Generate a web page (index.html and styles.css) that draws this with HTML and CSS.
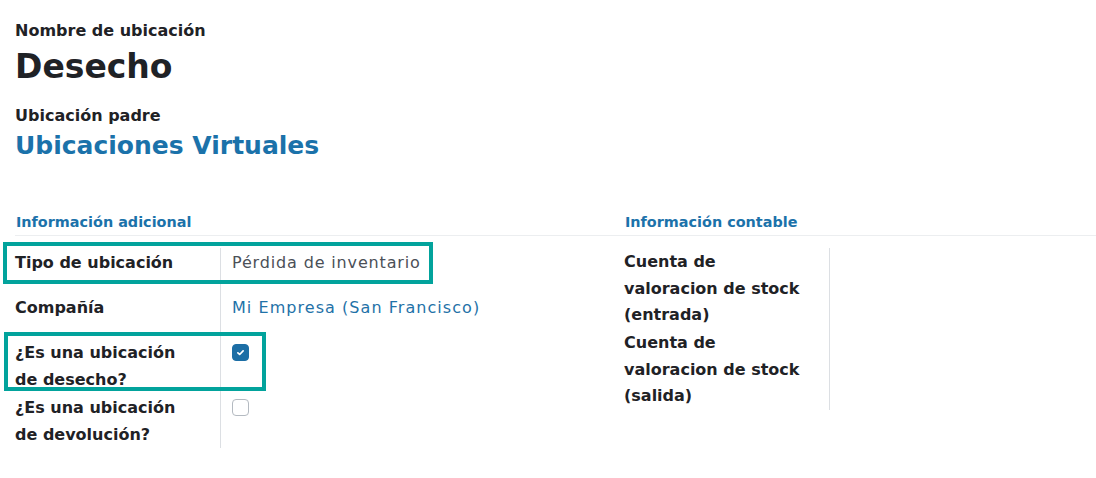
FILE: index.html
```html
<!DOCTYPE html>
<html lang="es">
<head>
<meta charset="utf-8">
<title>Desecho</title>
<link rel="stylesheet" href="styles.css">
</head>
<body>
<div class="sheet">
  <div class="field-title">
    <div class="title-label">Nombre de ubicación</div>
    <h1 class="title">Desecho</h1>
  </div>
  <div class="parent">
    <div class="title-label">Ubicación padre</div>
    <a class="parent-link" href="#">Ubicaciones Virtuales</a>
  </div>
  <div class="groups">
    <section class="group group-left">
      <h2 class="group-title">Información adicional</h2>
      <div class="rows">
        <div class="row">
          <div class="label">Tipo de ubicación</div>
          <div class="value value-min">Pérdida de inventario</div>
          <span class="annot annot-a"></span>
        </div>
        <div class="row">
          <div class="label">Compañía</div>
          <div class="value value-min"><a class="link" href="#">Mi Empresa (San Francisco)</a></div>
        </div>
        <div class="row">
          <div class="label">¿Es una ubicación<br>de desecho?</div>
          <div class="value"><span class="check checked"><svg viewBox="0 0 16 16" width="16" height="16"><path d="M5.2 8.3 L7.1 10.1 L10.8 6.2" fill="none" stroke="#fff" stroke-width="1.8" stroke-linecap="round" stroke-linejoin="round"/></svg></span></div>
          <span class="annot annot-b"></span>
        </div>
        <div class="row">
          <div class="label">¿Es una ubicación<br>de devolución?</div>
          <div class="value"><span class="check"></span></div>
        </div>
      </div>
    </section>
    <section class="group group-right">
      <h2 class="group-title">Información contable</h2>
      <div class="rows rows-right">
        <div class="row">
          <div class="label label-tight">Cuenta de<br>valoracion de stock<br>(entrada)</div>
          <div class="value"></div>
        </div>
        <div class="row">
          <div class="label label-tight">Cuenta de<br>valoracion de stock<br>(salida)</div>
          <div class="value"></div>
        </div>
      </div>
    </section>
  </div>
</div>
</body>
</html>
```
FILE: styles.css
```css
body {
  margin: 0;
  background: #ffffff;
  color: #1f2226;
  font-family: "DejaVu Sans", "Liberation Sans", sans-serif;
}

.sheet {
  padding: 19px 0 0 15px;
}

.title-label {
  font-size: 16px;
  line-height: 24px;
  font-weight: bold;
}

.title {
  margin: 0;
  padding-top: 2px;
  font-size: 33px;
  line-height: 44px;
  font-weight: bold;
}

.parent {
  margin-top: 15px;
}

.parent-link {
  display: block;
  font-size: 25px;
  line-height: 36px;
  font-weight: bold;
  color: #1b72aa;
  text-decoration: none;
}

.groups {
  display: flex;
  margin-top: 48px;
}

.group-left {
  width: 585px;
}

.group-right {
  flex: 1;
}

.group-title {
  margin: 0;
  padding: 0 0 3px 1px;
  font-size: 14.4px;
  line-height: 20px;
  font-weight: bold;
  color: #1b72aa;
  border-bottom: 1px solid #eceef0;
}

.group-right .group-title {
  padding-left: 25px;
}

.rows {
  margin-top: 12px;
}

.rows-right {
  margin-left: 24px;
}

.row {
  position: relative;
  display: grid;
  grid-template-columns: 205px 1fr;
}

.label {
  padding-top: 1px;
  font-size: 16px;
  line-height: 27px;
  font-weight: bold;
  color: #1f2226;
}

.label-tight {
  line-height: 26.67px;
}

.value {
  border-left: 1px solid #dcdfe3;
  padding-left: 11px;
  padding-top: 1px;
  font-size: 16px;
  line-height: 27px;
  letter-spacing: 0.85px;
  color: #4b5057;
}

.value-min {
  min-height: 44px;
}

.link {
  color: #1f72a8;
  letter-spacing: 1.05px;
  text-decoration: none;
}

.check {
  display: block;
  width: 17px;
  height: 17px;
  margin-top: 5px;
  box-sizing: border-box;
  border: 1px solid #b4bac1;
  border-radius: 4px;
  background: #ffffff;
}

.check.checked {
  border-color: #1c6ea5;
  background: #1c6ea5;
}

.check svg {
  display: block;
  margin: 0;
  width: 15px;
  height: 15px;
}

.annot {
  position: absolute;
  box-sizing: border-box;
  border: 4px solid #02a39c;
  pointer-events: none;
}

.annot-a {
  left: -12px;
  top: -6px;
  width: 430px;
  height: 42px;
}

.annot-b {
  left: -11px;
  top: -6px;
  width: 262px;
  height: 59px;
}
```
